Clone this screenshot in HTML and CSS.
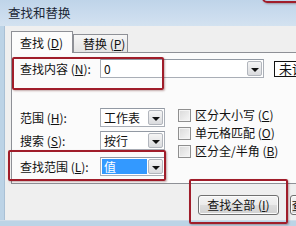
FILE: index.html
```html
<!DOCTYPE html>
<html lang="zh-CN">
<head>
<meta charset="utf-8">
<title>查找和替换</title>
<link rel="stylesheet" href="styles.css">
</head>
<body>
<div class="win">
  <div class="title">查找和替换</div>
  <div class="frame">
    <div class="edge"></div>
    <div class="body">
      <div class="tabs">
        <div class="tab active">查找 (<u>D</u>)</div>
        <div class="tab">替换 (<u>P</u>)</div>
      </div>
      <div class="panel">
        <div class="row1">
          <span class="lbl">查找内容 (<u>N</u>):</span>
          <div class="combo wide"><span class="val">0</span><span class="btn"><i class="tri"></i></span></div>
          <div class="fmt">未设定格式</div>
        </div>
        <div class="opts">
          <div class="leftcol">
            <div class="orow o1"><span class="lbl">范围 (<u>H</u>):</span><div class="combo"><span class="val">工作表</span><span class="btn"><i class="tri"></i></span></div></div>
            <div class="orow o2"><span class="lbl">搜索 (<u>S</u>):</span><div class="combo"><span class="val">按行</span><span class="btn"><i class="tri"></i></span></div></div>
            <div class="orow o3"><span class="lbl">查找范围 (<u>L</u>):</span><div class="combo"><span class="val sel">值</span><span class="btn"><i class="tri"></i></span></div></div>
          </div>
          <div class="checks">
            <div class="chk"><span class="box"></span>区分大小写 (<u>C</u>)</div>
            <div class="chk"><span class="box"></span>单元格匹配 (<u>O</u>)</div>
            <div class="chk"><span class="box"></span>区分全/半角 (<u>B</u>)</div>
          </div>
        </div>
      </div>
      <div class="buttons">
        <div class="pb">查找全部 (<u>I</u>)</div>
        <div class="pb">查找下一个 (<u>F</u>)</div>
      </div>
    </div>
  </div>
  <div class="bottom"></div>
  <div class="mark m1"></div>
  <div class="mark m2"></div>
  <div class="mark m3"></div>
  <div class="mark m4"></div>
</div>
</body>
</html>
```

FILE: styles.css
```css
html, body {
  margin: 0;
  padding: 0;
}
body {
  font-family: "Noto Sans CJK SC", "DejaVu Sans", sans-serif;
  font-size: 12px;
  color: #111;
}
.win {
  position: relative;
  width: 296px;
  height: 226px;
  overflow: hidden;
  display: flex;
  flex-direction: column;
  background: #c4d8ea;
}
.title {
  height: 26px;
  flex: none;
  box-sizing: border-box;
  padding: 5px 0 0 8px;
  line-height: 16px;
  font-size: 12.5px;
  color: #1c2736;
  background: linear-gradient(#bfd4e9, #cbdcee 60%, #d3e2f0);
}
.frame {
  flex: 1;
  display: flex;
  min-height: 0;
}
.edge {
  width: 4px;
  flex: none;
  background: #bcd3e6;
  border-right: 1px solid #a9c0d5;
}
.body {
  flex: 1;
  background: #efefef;
  overflow: hidden;
  display: flex;
  flex-direction: column;
}
.bottom {
  height: 5px;
  flex: none;
  background: #bcd4e6;
  border-top: 1px solid #cfdce8;
}
.tabs {
  display: flex;
  align-items: flex-end;
  height: 21px;
  margin-top: 5px;
  padding-left: 6px;
}
.tab {
  box-sizing: border-box;
  height: 18px;
  width: 55px;
  border: 1px solid #8e9096;
  border-bottom: none;
  background: linear-gradient(#f6f6f6, #e4e4e4);
  padding-left: 9px;
  line-height: 17px;
  white-space: nowrap;
}
.tab.active {
  width: 62px;
  height: 22px;
  margin-bottom: -1px;
  background: #fcfcfc;
  padding-left: 8px;
  line-height: 21px;
  position: relative;
  z-index: 1;
}
.panel {
  box-sizing: border-box;
  margin-left: 6px;
  width: 300px;
  height: 132px;
  flex: none;
  border: 1px solid #8e9096;
  background: #fbfbfb;
}
.row1 {
  display: flex;
  align-items: center;
  margin-top: 6px;
  padding-left: 8px;
  height: 19px;
}
.lbl {
  width: 80px;
  flex: none;
  white-space: nowrap;
  line-height: 16px;
}
u {
  text-decoration: underline;
  text-underline-offset: 1px;
}
.combo {
  box-sizing: border-box;
  width: 65px;
  height: 19px;
  flex: none;
  display: flex;
  border: 1px solid #a9aeb6;
  border-top-color: #9299a3;
  background: #fff;
  padding: 1px;
}
.combo.wide {
  width: 164px;
}
.val {
  flex: 1;
  padding-left: 2px;
  line-height: 15px;
  white-space: nowrap;
  overflow: hidden;
}
.val.sel {
  background: #3399ff;
  color: #fff;
  margin-right: 1px;
}
.btn {
  width: 15px;
  flex: none;
  box-sizing: border-box;
  border: 1px solid #b2b6bd;
  border-radius: 2px;
  background: linear-gradient(#f5f5f5, #dadbde);
  display: flex;
  align-items: center;
  justify-content: center;
}
.tri {
  width: 0;
  height: 0;
  border-left: 4px solid transparent;
  border-right: 4px solid transparent;
  border-top: 4px solid #111;
  margin-top: 2px;
}
.fmt {
  margin-left: 10px;
  box-sizing: border-box;
  height: 16px;
  padding: 0 4px;
  border: 1px solid #111;
  background: #fff;
  line-height: 14px;
  white-space: nowrap;
  font-size: 13px;
}
.opts {
  display: flex;
  margin-top: 28px;
}
.leftcol {
  padding-left: 8px;
  display: flex;
  flex-direction: column;
}
.orow {
  display: flex;
  align-items: center;
  height: 19px;
}
.o1 { margin-top: 2px; }
.o2 { margin-top: 4px; }
.o3 { margin-top: 7px; }
.checks {
  margin-left: 13px;
  display: flex;
  flex-direction: column;
}
.chk {
  display: flex;
  align-items: center;
  height: 18px;
  white-space: nowrap;
  line-height: 16px;
}
.box {
  box-sizing: border-box;
  width: 13px;
  height: 13px;
  margin-right: 4px;
  border: 1px solid #8f8f8f;
  background: linear-gradient(135deg, #d9d9d9, #f7f7f7);
  box-shadow: inset 0 0 0 1px #f4f4f4;
}
.buttons {
  display: flex;
  gap: 11px;
  margin-top: 11px;
  padding-left: 193px;
}
.pb {
  box-sizing: border-box;
  width: 81px;
  height: 20px;
  flex: none;
  border: 1px solid #707070;
  border-radius: 3px;
  background: linear-gradient(#f4f4f4, #ebebeb 50%, #dddddd 51%, #d2d2d2);
  box-shadow: inset 0 0 0 1px #fcfcfc;
  text-align: center;
  line-height: 18px;
  white-space: nowrap;
}
.mark {
  position: absolute;
  box-sizing: border-box;
  border: 2px solid #a01d2a;
  border-radius: 2px;
  box-shadow: 1px 1px 2px rgba(90, 20, 20, 0.35);
  z-index: 5;
}
.m1 { left: 12px; top: 57px; width: 152px; height: 33px; }
.m2 { left: 8px; top: 150px; width: 158px; height: 31px; }
.m3 { left: 189px; top: 179px; width: 99px; height: 45px; }
.m4 { left: 262px; top: -22px; width: 60px; height: 25px; border-radius: 5px; }
```
